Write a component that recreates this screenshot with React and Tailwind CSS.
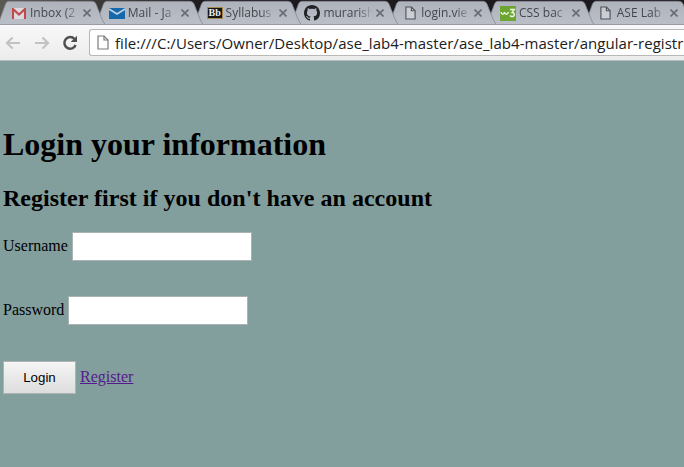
import React from "react";

const PageIcon = ({ className }) => (
  <svg className={className} viewBox="0 0 12 15" fill="none" stroke="currentColor" strokeWidth="1.2">
    <path d="M1 1h6l4 4v9H1z" fill="#fff" fillOpacity=".3" />
    <path d="M7 1v4h4" />
  </svg>
);

const Gmail = () => (
  <svg className="h-[11px] w-[14px]" viewBox="0 0 14 11">
    <path d="M0 0h14v11H0z" fill="#dcdade" />
    <path d="M1 11V1l6 5.5L13 1v10" fill="none" stroke="#c04a4b" strokeWidth="2.1" />
  </svg>
);

const Mail = () => (
  <svg className="h-[11px] w-4" viewBox="0 0 16 11">
    <path d="M0 0h16v11H0z" fill="#1668ab" />
    <path d="M0 1l8 5L16 1" fill="none" stroke="#c3d4e5" strokeWidth="1.5" />
  </svg>
);

const Blackboard = () => (
  <span className="flex h-[12px] w-4 items-center justify-center border border-[#a18b50] bg-[#171614] font-['Liberation_Serif',serif] text-[10px] leading-none font-bold text-[#eeeeee]">
    Bb
  </span>
);

const Github = () => (
  <svg className="h-4 w-4" viewBox="0 0 16 16" fill="#202226">
    <path d="M8 0C3.58 0 0 3.58 0 8c0 3.54 2.29 6.53 5.47 7.59.4.07.55-.17.55-.38 0-.19-.01-.82-.01-1.49-2.01.37-2.53-.49-2.69-.94-.09-.23-.48-.94-.82-1.13-.28-.15-.68-.52-.01-.53.63-.01 1.08.58 1.23.82.72 1.21 1.87.87 2.33.66.07-.52.28-.87.51-1.07-1.78-.2-3.64-.89-3.64-3.95 0-.87.31-1.59.82-2.15-.08-.2-.36-1.02.08-2.12 0 0 .67-.21 2.2.82.64-.18 1.32-.27 2-.27s1.36.09 2 .27c1.53-1.04 2.2-.82 2.2-.82.44 1.1.16 1.92.08 2.12.51.56.82 1.27.82 2.15 0 3.07-1.87 3.75-3.65 3.95.29.25.54.73.54 1.48 0 1.07-.01 1.93-.01 2.2 0 .21.15.46.55.38A8.01 8.01 0 0 0 16 8c0-4.42-3.58-8-8-8z" />
  </svg>
);

const W3 = () => (
  <svg className="h-[15px] w-4" viewBox="0 0 16 15">
    <path d="M0 0h16v15H0z" fill="#6da532" />
    <path d="M1 6c.5 3 3 3 3.5 0 .5 3 3 3 4 0M10 3.5h4.2L12 6.5c3.4 0 2.8 4.5-.2 4-.8 0-1.4-.4-1.8-1" fill="none" stroke="#edf5e4" strokeWidth="1.4" />
  </svg>
);

const TabPage = () => <PageIcon className="h-[14px] w-[11px] text-[#4d5056]" />;

// Each tab lies above the one to its right, so its slanted edge stays visible.
const tabs = [
  { icon: Gmail, label: "Inbox (2", layer: "z-[7]" },
  { icon: Mail, label: "Mail - Ja", layer: "z-[6]" },
  { icon: Blackboard, label: "Syllabus", layer: "z-[5]" },
  { icon: Github, label: "murarish", layer: "z-[4]" },
  { icon: TabPage, label: "login.vie", layer: "z-[3]" },
  { icon: W3, label: "CSS bac", layer: "z-[2]" },
  { icon: TabPage, label: "ASE Lab", layer: "z-[1]" },
];

function Tab({ icon: Icon, label, layer }) {
  return (
    <div className={`relative flex h-full w-[97.8px] shrink-0 items-center pt-[2px] pl-[8px] ${layer}`}>
      <svg className="absolute top-0 left-[-4px] h-[25px] w-[110px]" viewBox="0 0 110 25">
        <path d="M-1 25L1 19L6.5 4Q7.5 1.3 10 1.3H93Q96 1.3 97 4L103 19Q105 24 107 25Z" fill="url(#tabFill)" />
        <path d="M-1 25L1 19L6.5 4Q7.5 1.3 10 1.3H93Q96 1.3 97 4L103 19Q105 24 107 25" fill="none" stroke="#85888f" strokeWidth=".8" />
      </svg>
      <span className="relative flex w-4 shrink-0 items-center justify-center">
        <Icon />
      </span>
      <span className="relative ml-[3px] w-[50px] overflow-hidden mask-r-from-70% mask-r-to-100% whitespace-nowrap text-[12px] leading-4 text-[#44484e]">
        {label}
      </span>
      <svg className="relative ml-[3px] h-2 w-2 shrink-0" viewBox="0 0 8 8" stroke="#686c73" strokeWidth="1.6">
        <path d="M.5.5l7 7M7.5.5l-7 7" />
      </svg>
    </div>
  );
}

export default function App() {
  return (
    <div className="flex h-[467px] w-[684px] flex-col overflow-hidden bg-[#829e9d] font-['Open_Sans','Noto_Sans',sans-serif]">
      <svg className="absolute h-0 w-0">
        <defs>
          <linearGradient id="tabFill" x1="0" y1="0" x2="0" y2="1">
            <stop offset="0" stopColor="#aeb2ba" />
            <stop offset="1" stopColor="#bbbfc7" />
          </linearGradient>
        </defs>
      </svg>
      <div className="isolate flex h-[25px] shrink-0 overflow-hidden border-b border-[#999da3] bg-linear-to-r from-[#5a5953] via-[#1c1a1e] via-30% to-[#1c1a1e] pl-[3px]">
        {tabs.map((tab) => (
          <Tab key={tab.label} {...tab} />
        ))}
      </div>
      <div className="flex h-[36px] shrink-0 items-center border-b border-[#b7bebd] bg-linear-to-b from-[#f8f8f8] to-[#ececec] pl-[5px]">
        <svg className="h-[14px] w-4 shrink-0" viewBox="0 0 16 14" fill="none" stroke="#c2c2c2" strokeWidth="2.2">
          <path d="M15 7H2M7.5 1.5L2 7l5.5 5.5" />
        </svg>
        <svg className="ml-[13px] h-[14px] w-4 shrink-0" viewBox="0 0 16 14" fill="none" stroke="#c2c2c2" strokeWidth="2.2">
          <path d="M1 7h13M8.5 1.5L14 7l-5.5 5.5" />
        </svg>
        <svg className="ml-[12px] h-4 w-4 shrink-0" viewBox="0 0 16 16">
          <path d="M12.5 4A5.8 5.8 0 1 0 13.6 10" fill="none" stroke="#505050" strokeWidth="2.5" />
          <path d="M15 .7V7H8.7z" fill="#505050" />
        </svg>
        <div className="ml-[11px] flex h-[27px] flex-1 items-center overflow-hidden rounded-l-[3px] border border-r-0 border-[#b8b8b8] bg-white pl-[7px]">
          <PageIcon className="h-[15px] w-3 shrink-0 text-[#7b7b7b]" />
          <span className="ml-[6px] text-[15px] leading-5 tracking-[0.05px] whitespace-nowrap text-[#202020]">
            file:///C:/Users/Owner/Desktop/ase_lab4-master/ase_lab4-master/angular-registr
          </span>
        </div>
      </div>
      <main className="flex flex-col items-start pl-[3px] font-['Liberation_Serif',serif] text-black">
        <h1 className="mt-[65px] text-[32px] leading-[36px] font-bold">Login your information</h1>
        <h2 className="mt-[22px] text-[24px] leading-[28px] font-bold tracking-[0.02px]">Register first if you don't have an account</h2>
        <label className="mt-[20px] flex h-[29px] items-center text-[16px]">
          <span className="-mt-px">Username</span>
          <input className="ml-1 h-[29px] w-[180px] border border-[#a9b3b2] bg-white px-2 outline-none" />
        </label>
        <label className="mt-[35px] flex h-[29px] items-center text-[16px]">
          <span className="-mt-px">Password</span>
          <input type="password" className="ml-1 h-[29px] w-[180px] border border-[#a9b3b2] bg-white px-2 outline-none" />
        </label>
        <div className="mt-[36px] flex h-[33px] items-center">
          <button className="h-[33px] w-[73px] border border-[#aeb4b3] bg-linear-to-b from-[#f5f5f5] to-[#dddddd] font-['Liberation_Sans',sans-serif] text-[13.3px]">
            Login
          </button>
          <a href="#" className="-mt-px ml-1 text-[16px] text-[#551a8b] underline">
            Register
          </a>
        </div>
      </main>
    </div>
  );
}
